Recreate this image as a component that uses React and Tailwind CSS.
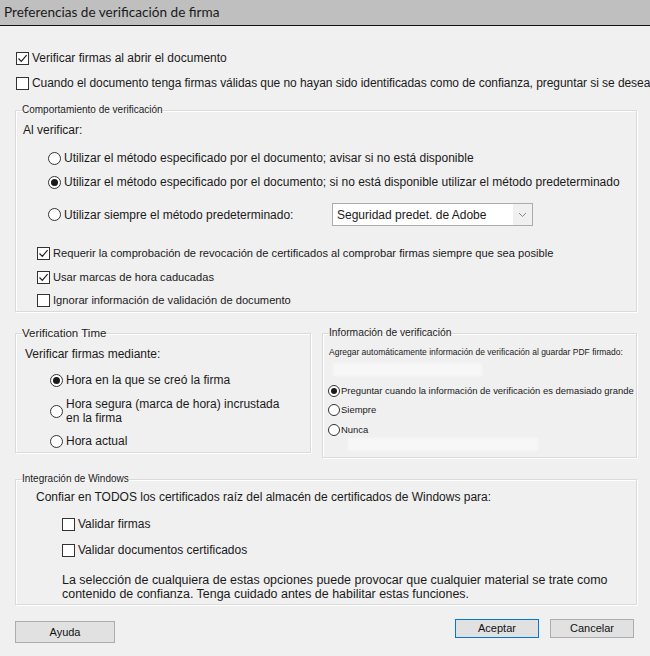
import React from "react";

// Small Windows-style controls
const Check = ({ checked }) => (
  <span className="w-[13px] h-[13px] shrink-0 border border-[#333] bg-white flex items-center justify-center">
    {checked && (
      <svg width="11" height="11" viewBox="0 0 11 11">
        <path d="M1.5 5.5 L4.3 8.3 L9.6 2.2" stroke="#222" strokeWidth="1.2" fill="none" />
      </svg>
    )}
  </span>
);

const Radio = ({ checked, small }) => (
  <span
    className={
      small
        ? "w-[12px] h-[12px] shrink-0 rounded-full border border-[#333] bg-white flex items-center justify-center"
        : "w-[13px] h-[13px] shrink-0 rounded-full border border-[#333] bg-white flex items-center justify-center"
    }
  >
    {checked && <span className={small ? "w-[6px] h-[6px] rounded-full bg-[#1a1a1a]" : "w-[7px] h-[7px] rounded-full bg-[#1a1a1a]"} />}
  </span>
);

const Group = ({ title, legendClass, className, children }) => (
  <fieldset
    className={
      "min-w-0 border border-[#dadada] shadow-[1px_1px_0_#fff,inset_1px_1px_0_#fff] " + className
    }
  >
    <legend className={"ml-[6px] leading-[14px] text-[#222] " + legendClass}>{title}</legend>
    {children}
  </fieldset>
);

export default function App() {
  return (
    <div
      className="w-[650px] h-[656px] bg-[#f0f0f0] text-[#1a1a1a] text-[12px] overflow-hidden"
      style={{ fontFamily: '"Liberation Sans", Arial, sans-serif' }}
    >
      <div
        className="h-[26px] bg-[#bfbfbf] border-b border-[#111] pl-[4px] text-[13.6px] leading-[25px] text-[#1a1a1a]"
        style={{ fontFamily: 'Lato, "Noto Sans", sans-serif' }}
      >
        Preferencias de verificación de firma
      </div>

      <div className="pl-[15px] pr-[13px]">
        <div className="mt-[24px] h-4 flex items-center gap-[3px] ml-px">
          <Check checked />
          <span>Verificar firmas al abrir el documento</span>
        </div>
        <div className="mt-[9px] h-4 flex items-center gap-[3px] ml-px whitespace-nowrap tracking-[-0.06px]">
          <Check />
          <span>
            Cuando el documento tenga firmas válidas que no hayan sido identificadas como de confianza, preguntar si se desea
          </span>
        </div>

        <Group title="Comportamiento de verificación" legendClass="text-[10px]" className="mt-[12px] pb-[3px]">
          <div className="mt-[5px] h-4 flex items-center pl-[7px]">Al verificar:</div>
          <div className="mt-[12px] h-4 flex items-center gap-[3px] pl-[32px]">
            <Radio />
            <span>Utilizar el método especificado por el documento; avisar si no está disponible</span>
          </div>
          <div className="mt-[8px] h-4 flex items-center gap-[3px] pl-[32px]">
            <Radio checked />
            <span>Utilizar el método especificado por el documento; si no está disponible utilizar el método predeterminado</span>
          </div>
          <div className="mt-[13px] h-[23px] flex items-center pl-[32px]">
            <div className="w-[284px] flex items-center gap-[3px]">
              <Radio />
              <span>Utilizar siempre el método predeterminado:</span>
            </div>
            <div className="w-[201px] h-[23px] border border-[#acacac] bg-white flex items-center">
              <span className="flex-1 pl-[4px]">Seguridad predet. de Adobe</span>
              <span className="w-[19px] h-full bg-[#f0f0f0] flex items-center justify-center">
                <svg width="9" height="6" viewBox="0 0 9 6">
                  <path d="M1 1 L4.5 4.5 L8 1" stroke="#888" strokeWidth="1" fill="none" />
                </svg>
              </span>
            </div>
          </div>
          <div className="mt-[19px] h-4 flex items-center gap-[3px] pl-[21px] text-[11.15px]">
            <Check checked />
            <span>Requerir la comprobación de revocación de certificados al comprobar firmas siempre que sea posible</span>
          </div>
          <div className="mt-[8px] h-4 flex items-center gap-[3px] pl-[21px] text-[11.15px]">
            <Check checked />
            <span>Usar marcas de hora caducadas</span>
          </div>
          <div className="mt-[7px] h-4 flex items-center gap-[3px] pl-[21px] text-[11.15px]">
            <Check />
            <span>Ignorar información de validación de documento</span>
          </div>
        </Group>

        <div className="mt-[14px] flex items-start gap-[11px]">
          <Group title="Verification Time" legendClass="text-[11.5px]" className="w-[296px] shrink-0 pb-[3px]">
            <div className="mt-[6px] h-4 flex items-center pl-[9px]">Verificar firmas mediante:</div>
            <div className="mt-[10px] h-4 flex items-center gap-[3px] pl-[34px]">
              <Radio checked />
              <span>Hora en la que se creó la firma</span>
            </div>
            <div className="mt-[9px] flex items-center gap-[3px] pl-[34px] leading-[14px]">
              <Radio />
              <span>
                Hora segura (marca de hora) incrustada
                <br />
                en la firma
              </span>
            </div>
            <div className="mt-[8px] h-4 flex items-center gap-[3px] pl-[34px]">
              <Radio />
              <span>Hora actual</span>
            </div>
          </Group>

          <Group title="Información de verificación" legendClass="text-[10.3px]" className="flex-1 pb-[6px]">
            <div className="mt-[6px] h-3 flex items-center pl-[6px] text-[8.5px] whitespace-nowrap">
              Agregar automáticamente información de verificación al guardar PDF firmado:
            </div>
            <div className="mt-[5px] ml-[10px] w-[149px] h-[13px] bg-[#f7f7f7] blur-[1px]" />
            <div className="mt-[8px] h-[14px] flex items-center gap-px pl-[5px] text-[9.45px] whitespace-nowrap">
              <Radio small checked />
              <span>Preguntar cuando la información de verificación es demasiado grande</span>
            </div>
            <div className="mt-[5px] h-[14px] flex items-center gap-px pl-[5px] text-[9.45px]">
              <Radio small />
              <span>Siempre</span>
            </div>
            <div className="mt-[6px] h-[14px] flex items-center gap-px pl-[5px] text-[9.45px]">
              <Radio small />
              <span>Nunca</span>
            </div>
            <div className="mt-px ml-[25px] w-[190px] h-[13px] bg-[#f7f7f7] blur-[1px]" />
          </Group>
        </div>

        <Group title="Integración de Windows" legendClass="text-[10px]" className="mt-[14px] pb-[3px]">
          <div className="mt-[3px] h-4 flex items-center pl-[20px]">
            Confiar en TODOS los certificados raíz del almacén de certificados de Windows para:
          </div>
          <div className="mt-[11px] h-4 flex items-center gap-[3px] pl-[46px]">
            <Check />
            <span>Validar firmas</span>
          </div>
          <div className="mt-[10px] h-4 flex items-center gap-[3px] pl-[46px]">
            <Check />
            <span>Validar documentos certificados</span>
          </div>
          <p className="mt-[15px] pl-[46px] leading-[14px] text-[12.45px]">
            La selección de cualquiera de estas opciones puede provocar que cualquier material se trate como
            <br />
            contenido de confianza. Tenga cuidado antes de habilitar estas funciones.
          </p>
        </Group>

        <div className="mt-[14px] flex items-start text-[11px]">
          <button className="mt-[2px] w-[100px] h-[22px] border border-[#adadad] bg-[#e1e1e1] text-[#111]">
            Ayuda
          </button>
          <div className="ml-auto mr-[3px] flex gap-[11px]">
            <button className="w-[84px] h-[19px] border border-[#0078d7] bg-[#e1e1e1] text-[#111]">Aceptar</button>
            <button className="w-[84px] h-[19px] border border-[#adadad] bg-[#e1e1e1] text-[#111]">Cancelar</button>
          </div>
        </div>
      </div>
    </div>
  );
}
